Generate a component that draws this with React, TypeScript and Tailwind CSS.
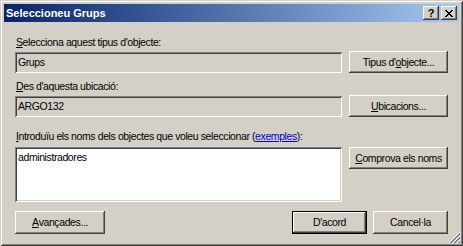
import React from "react";

const raised =
  "shadow-[inset_-1px_-1px_#404040,inset_1px_1px_#ffffff,inset_-2px_-2px_#808080,inset_2px_2px_#d4d0c8]";
const sunken =
  "shadow-[inset_1px_1px_#808080,inset_-1px_-1px_#ffffff,inset_2px_2px_#404040,inset_-2px_-2px_#d4d0c8]";

function Btn({ children, className = "", def = false }: { children: React.ReactNode; className?: string; def?: boolean }) {
  if (def) {
    return (
      <div className={"border border-black bg-[#d4d0c8] " + className}>
        <div className={"flex h-full w-full items-center justify-center " + raised}>{children}</div>
      </div>
    );
  }
  return (
    <div className={"flex items-center justify-center bg-[#d4d0c8] " + raised + " " + className}>{children}</div>
  );
}

function Field({ children, className = "", white = false }: { children?: React.ReactNode; className?: string; white?: boolean }) {
  return (
    <div className={(white ? "bg-white " : "bg-[#d4d0c8] ") + sunken + " px-[3px] " + className}>{children}</div>
  );
}

function SizeGrip() {
  return (
    <svg width="12" height="12" viewBox="0 0 12 12" className="absolute bottom-[3px] right-[3px]">
      {[0, 4, 8].map((o) => (
        <g key={o}>
          <line x1={o + 1} y1="12" x2="12" y2={o + 1} stroke="#ffffff" strokeWidth="1" />
          <line x1={o + 2} y1="12" x2="12" y2={o + 2} stroke="#808080" strokeWidth="1" />
          <line x1={o + 3} y1="12" x2="12" y2={o + 3} stroke="#808080" strokeWidth="1" />
        </g>
      ))}
    </svg>
  );
}

export default function App() {
  return (
    <div
      className={
        "relative flex h-[246px] w-[463px] flex-col bg-[#d4d0c8] p-[4px] text-[10.5px] leading-[13px] tracking-[-0.4px] text-black " +
        "shadow-[inset_1px_1px_#d4d0c8,inset_-1px_-1px_#404040,inset_2px_2px_#ffffff,inset_-2px_-2px_#808080]"
      }
      style={{ fontFamily: '"Liberation Sans", Arial, sans-serif' }}
    >
      {/* Title bar */}
      <div className="flex h-[18px] items-center bg-gradient-to-r from-[#0a246a] to-[#a6caf0] pl-[2px] pr-[2px]">
        <span className="flex-1 text-[11px] font-bold tracking-normal text-white">Seleccioneu Grups</span>
        <Btn className="h-[14px] w-[16px]">
          <span className="text-[11px] font-bold leading-none">?</span>
        </Btn>
        <Btn className="ml-[2px] h-[14px] w-[16px]">
          <svg width="8" height="7" viewBox="0 0 8 7" shapeRendering="crispEdges">
            <path d="M0 0h2v1H0zM6 0h2v1H6zM1 1h2v1H1zM5 1h2v1H5zM2 2h4v1H2zM3 3h2v1H3zM2 4h4v1H2zM1 5h2v1H1zM5 5h2v1H5zM0 6h2v1H0zM6 6h2v1H6z" fill="#000" />
          </svg>
        </Btn>
      </div>

      {/* Content */}
      <div className="flex flex-1 flex-col px-[11px] pt-[14px]">
        <div className="pl-[1px]">
          <span className="underline">S</span>elecciona aquest tipus d'objecte:
        </div>
        <div className="mt-[2px] flex h-[22px] items-end gap-[7px]">
          <Field className="flex h-[21px] flex-1 items-center">Grups</Field>
          <Btn className="h-[22px] w-[99px]">
            Tipus d'<span className="underline">o</span>bjecte...
          </Btn>
        </div>

        <div className="mt-[7px] pl-[1px]">
          <span className="underline">D</span>es d'aquesta ubicació:
        </div>
        <div className="mt-[2px] flex h-[22px] items-end gap-[7px]">
          <Field className="flex h-[21px] flex-1 items-center">ARGO132</Field>
          <Btn className="h-[22px] w-[99px]">
            <span className="underline">U</span>bicacions...
          </Btn>
        </div>

        <div className="mt-[13px] pl-[1px]">
          <span className="underline">I</span>ntroduïu els noms dels objectes que voleu seleccionar (
          <span className="text-[#0000cc] underline">exemples</span>):
        </div>
        <div className="mt-[4px] flex items-start gap-[7px]">
          <Field white className="h-[55px] flex-1 pt-[4px]">administradores</Field>
          <Btn className="h-[22px] w-[99px]">
            <span className="underline">C</span>omprova els noms
          </Btn>
        </div>

        <div className="mt-[9px] flex items-start">
          <Btn className="h-[23px] w-[90px]">
            <span className="underline">A</span>vançades...
          </Btn>
          <div className="flex-1" />
          <Btn def className="h-[23px] w-[75px]">D'acord</Btn>
          <Btn className="ml-[6px] h-[23px] w-[75px]">Cancel·la</Btn>
        </div>
      </div>

      <SizeGrip />
    </div>
  );
}
